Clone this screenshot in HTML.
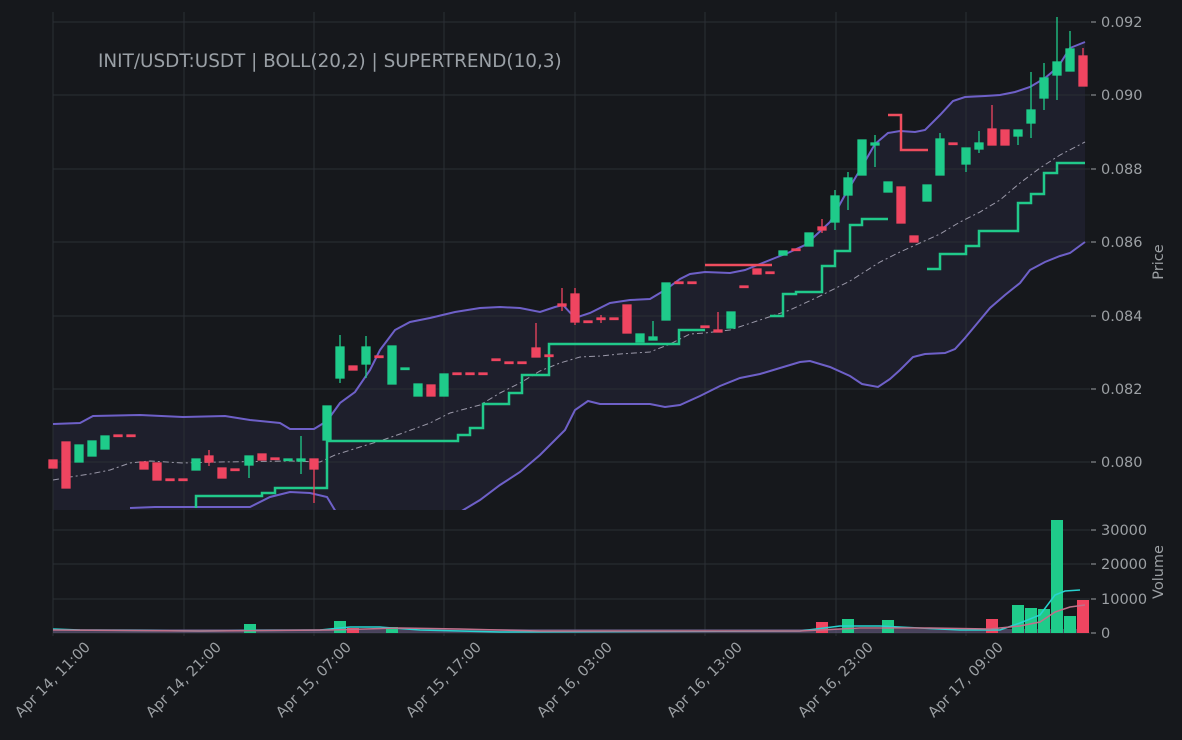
<!DOCTYPE html>
<html><head><meta charset="utf-8"><style>
html,body{margin:0;padding:0;background:#16181c;}
svg{display:block;font-family:"DejaVu Sans","Liberation Sans",sans-serif;}
</style></head><body>
<svg width="1182" height="740" viewBox="0 0 1182 740" xmlns="http://www.w3.org/2000/svg">
<rect width="1182" height="740" fill="#16181c"/>
<clipPath id="pc"><rect x="53" y="10" width="1040" height="500"/></clipPath>
<g clip-path="url(#pc)">
<path fill="#1e1f2c" d="M53,424 L80,423 93,416 140,415 183,417 225,416 250,420 280,423 290,429 314,429 327,421 340,403 355,392 370,370 380,350 395,330 410,322 430,318 455,312 480,308 500,307 520,308 540,312 555,307 563,305 575,318 590,313 610,303 630,300 650,299 665,290 680,279 690,274 705,272 730,273 745,270 760,264 775,258 790,252 805,245 815,236 830,222 845,195 860,170 875,144 888,133 900,131 915,132 925,130 940,115 953,101 965,97 985,96 1000,95 1015,92 1030,87 1045,78 1058,67 1070,48 1085,42 L1085,242 1070,253 1060,256 1045,262 1030,270 1020,283 1005,295 990,308 980,320 965,338 955,349 945,353 925,354 913,357 900,370 890,379 878,387 862,384 850,376 830,367 810,361 800,362 780,368 760,374 740,378 720,386 700,396 680,405 665,407 650,404 600,404 588,401 575,410 565,430 555,440 540,455 520,472 500,485 480,500 462,510 53,510 Z"/>
</g>
<g stroke="#2b2f35" stroke-width="1">
<line x1="53" y1="22" x2="1090" y2="22"/><line x1="53" y1="95" x2="1090" y2="95"/><line x1="53" y1="169" x2="1090" y2="169"/><line x1="53" y1="242" x2="1090" y2="242"/><line x1="53" y1="316" x2="1090" y2="316"/><line x1="53" y1="389" x2="1090" y2="389"/><line x1="53" y1="462" x2="1090" y2="462"/>
<line x1="53" y1="530" x2="1090" y2="530"/><line x1="53" y1="564" x2="1090" y2="564"/><line x1="53" y1="599" x2="1090" y2="599"/><line x1="53" y1="633" x2="1090" y2="633"/>
<line x1="53" y1="12" x2="53" y2="636"/><line x1="184" y1="12" x2="184" y2="636"/><line x1="314" y1="12" x2="314" y2="636"/><line x1="444" y1="12" x2="444" y2="636"/><line x1="575" y1="12" x2="575" y2="636"/><line x1="705" y1="12" x2="705" y2="636"/><line x1="836" y1="12" x2="836" y2="636"/><line x1="966" y1="12" x2="966" y2="636"/>
</g>
<g clip-path="url(#pc)" fill="none">
<polyline stroke="#6e60c8" stroke-width="2" points="53,424 80,423 93,416 140,415 183,417 225,416 250,420 280,423 290,429 314,429 327,421 340,403 355,392 370,370 380,350 395,330 410,322 430,318 455,312 480,308 500,307 520,308 540,312 555,307 563,305 575,318 590,313 610,303 630,300 650,299 665,290 680,279 690,274 705,272 730,273 745,270 760,264 775,258 790,252 805,245 815,236 830,222 845,195 860,170 875,144 888,133 900,131 915,132 925,130 940,115 953,101 965,97 985,96 1000,95 1015,92 1030,87 1045,78 1058,67 1070,48 1085,42"/>
<polyline stroke="#6e60c8" stroke-width="2" points="130,508 155,507 185,507 250,507 270,497 290,492 310,493 327,497 336,512"/>
<polyline stroke="#6e60c8" stroke-width="2" points="460,512 480,500 500,485 520,472 540,455 555,440 565,430 575,410 588,401 600,404 650,404 665,407 680,405 700,396 720,386 740,378 760,374 780,368 800,362 810,361 830,367 850,376 862,384 878,387 890,379 900,370 913,357 925,354 945,353 955,349 965,338 980,320 990,308 1005,295 1020,283 1030,270 1045,262 1060,256 1070,253 1085,242"/>
<polyline stroke="#9a98a8" stroke-width="1" stroke-dasharray="6,3,2,3" points="53,480 70,477 90,474 110,470 130,463 150,461 183,463 220,462 290,461 320,462 335,455 360,447 380,441 400,434 430,423 450,413 480,405 500,393 520,383 540,371 560,363 580,357 600,356 620,354 650,352 670,344 690,334 705,333 730,330 760,320 790,310 820,296 850,281 880,262 900,252 920,243 940,234 960,222 980,212 1000,200 1020,183 1040,168 1060,155 1085,142"/>
<polyline stroke="#21c98a" stroke-width="2.5" points="196,508 196,496 262,496 262,493 275,493 275,488 327,488 327,441 458,441 458,435 470,435 470,428 483,428 483,404 509,404 509,393 522,393 522,375 549,375 549,344 679,344 679,330 705,330"/>
<polyline stroke="#21c98a" stroke-width="2.5" points="770,316 783,316 783,294 796,294 796,292 822,292 822,266 835,266 835,251 850,251 850,225 862,225 862,219 888,219"/>
<polyline stroke="#21c98a" stroke-width="2.5" points="927,269 940,269 940,254 966,254 966,246 979,246 979,231 1018,231 1018,203 1031,203 1031,194 1044,194 1044,173 1057,173 1057,163 1085,163"/>
<polyline stroke="#ef4d5e" stroke-width="2.5" points="705,265 772,265"/>
<polyline stroke="#ef4d5e" stroke-width="2.5" points="888,115 901,115 901,150 928,150"/>
</g>
<g stroke-width="1.3">
<g fill="#ef4560" stroke="#ef4560">
<rect x="49" y="460" width="8" height="8"/>
<line x1="66" y1="442" x2="66" y2="488"/><rect x="62" y="442" width="8" height="46"/>
<rect x="114" y="435" width="8" height="1.5"/><rect x="127" y="435" width="8" height="1.5"/>
<rect x="140" y="462" width="8" height="7"/>
<line x1="157" y1="463" x2="157" y2="480"/><rect x="153" y="463" width="8" height="17"/>
<rect x="166" y="479" width="8" height="1.5"/><rect x="179" y="479" width="8" height="1.5"/>
<line x1="209" y1="450" x2="209" y2="466"/><rect x="205" y="456" width="8" height="6"/>
<rect x="218" y="468" width="8" height="10"/>
<rect x="231" y="469" width="8" height="1.5"/>
<rect x="258" y="454" width="8" height="6"/>
<rect x="271" y="458" width="8" height="1.5"/>
<line x1="314" y1="459" x2="314" y2="503"/><rect x="310" y="459" width="8" height="10"/>
<rect x="349" y="366" width="8" height="4"/>
<rect x="375" y="356" width="8" height="1.5"/>
<rect x="427" y="385" width="8" height="11"/>
<rect x="453" y="373" width="8" height="1.5"/><rect x="466" y="373" width="8" height="1.5"/><rect x="479" y="373" width="8" height="1.5"/>
<rect x="492" y="359" width="8" height="1.5"/><rect x="505" y="362" width="8" height="1.5"/><rect x="518" y="362" width="8" height="1.5"/>
<line x1="536" y1="323" x2="536" y2="357"/><rect x="532" y="348" width="8" height="9"/>
<rect x="545" y="355" width="8" height="1.5"/>
<line x1="562" y1="288" x2="562" y2="311"/><rect x="558" y="304" width="8" height="2"/>
<line x1="575" y1="288" x2="575" y2="325"/><rect x="571" y="294" width="8" height="28"/>
<rect x="584" y="321" width="8" height="1.5"/>
<line x1="601" y1="315" x2="601" y2="323"/><rect x="597" y="318" width="8" height="1.5"/>
<rect x="610" y="318" width="8" height="1.5"/>
<rect x="623" y="305" width="8" height="28"/>
<rect x="675" y="282" width="8" height="1.5"/><rect x="688" y="282" width="8" height="1.5"/>
<rect x="701" y="326" width="8" height="1.5"/>
<line x1="718" y1="312" x2="718" y2="332"/><rect x="714" y="330" width="8" height="2"/>
<rect x="740" y="286" width="8" height="1.5"/>
<rect x="753" y="269" width="8" height="5"/>
<rect x="766" y="272" width="8" height="1.5"/>
<rect x="792" y="249" width="8" height="1.5"/>
<line x1="822" y1="219" x2="822" y2="233"/><rect x="818" y="227" width="8" height="3"/>
<rect x="897" y="187" width="8" height="36"/>
<rect x="910" y="236" width="8" height="6"/>
<rect x="949" y="143" width="8" height="1.5"/>
<line x1="992" y1="105" x2="992" y2="145"/><rect x="988" y="129" width="8" height="16"/>
<rect x="1001" y="130" width="8" height="15"/>
<line x1="1083" y1="48" x2="1083" y2="86"/><rect x="1079" y="56" width="8" height="30"/>
</g>
<g fill="#1fcb8a" stroke="#1fcb8a">
<rect x="75" y="445" width="8" height="17"/>
<rect x="88" y="441" width="8" height="15"/>
<rect x="101" y="436" width="8" height="13"/>
<rect x="192" y="459" width="8" height="11"/>
<line x1="249" y1="456" x2="249" y2="478"/><rect x="245" y="456" width="8" height="9"/>
<rect x="284" y="459" width="8" height="1.5"/>
<line x1="301" y1="436" x2="301" y2="474"/><rect x="297" y="459" width="8" height="2"/>
<rect x="323" y="406" width="8" height="34"/>
<line x1="340" y1="335" x2="340" y2="383"/><rect x="336" y="347" width="8" height="31"/>
<line x1="366" y1="336" x2="366" y2="378"/><rect x="362" y="347" width="8" height="17"/>
<rect x="388" y="346" width="8" height="38"/>
<rect x="401" y="368" width="8" height="1.5"/>
<rect x="414" y="384" width="8" height="12"/>
<rect x="440" y="374" width="8" height="22"/>
<rect x="636" y="334" width="8" height="8"/>
<line x1="653" y1="321" x2="653" y2="340"/><rect x="649" y="337" width="8" height="3"/>
<rect x="662" y="283" width="8" height="37"/>
<rect x="727" y="312" width="8" height="16"/>
<rect x="779" y="251" width="8" height="4"/>
<rect x="805" y="233" width="8" height="13"/>
<line x1="835" y1="190" x2="835" y2="230"/><rect x="831" y="196" width="8" height="26"/>
<line x1="848" y1="172" x2="848" y2="210"/><rect x="844" y="178" width="8" height="17"/>
<rect x="858" y="140" width="8" height="35"/>
<line x1="875" y1="135" x2="875" y2="167"/><rect x="871" y="143" width="8" height="2"/>
<rect x="884" y="182" width="8" height="10"/>
<rect x="923" y="185" width="8" height="16"/>
<line x1="940" y1="133" x2="940" y2="175"/><rect x="936" y="139" width="8" height="36"/>
<line x1="966" y1="148" x2="966" y2="172"/><rect x="962" y="148" width="8" height="16"/>
<line x1="979" y1="131" x2="979" y2="153"/><rect x="975" y="143" width="8" height="6"/>
<line x1="1018" y1="131" x2="1018" y2="145"/><rect x="1014" y="130" width="8" height="6"/>
<line x1="1031" y1="72" x2="1031" y2="138"/><rect x="1027" y="110" width="8" height="13"/>
<line x1="1044" y1="63" x2="1044" y2="110"/><rect x="1040" y="78" width="8" height="20"/>
<line x1="1057" y1="17" x2="1057" y2="100"/><rect x="1053" y="62" width="8" height="13"/>
<line x1="1070" y1="31" x2="1070" y2="71"/><rect x="1066" y="49" width="8" height="22"/>
</g>
</g>
<g>
<rect x="53" y="629" width="1032" height="4" fill="#6b5f86" opacity="0.6"/>
<g fill="#1fcb8a">
<rect x="244" y="624" width="12" height="9"/><rect x="334" y="621" width="12" height="12"/><rect x="386" y="627" width="12" height="6"/>
<rect x="842" y="619" width="12" height="14"/><rect x="882" y="620" width="12" height="13"/>
<rect x="1012" y="605" width="12" height="28"/><rect x="1025" y="608" width="12" height="25"/><rect x="1038" y="609" width="12" height="24"/>
<rect x="1051" y="520" width="12" height="113"/><rect x="1064" y="616" width="12" height="17"/>
</g>
<g fill="#ef4560">
<rect x="816" y="622" width="12" height="11"/><rect x="986" y="619" width="12" height="14"/><rect x="1077" y="600" width="12" height="33"/>
<rect x="347" y="628" width="12" height="5"/>
</g>
<polyline fill="none" stroke="#27d3d0" stroke-width="1.5" points="53,629 80,630 200,631 320,630 350,627 380,627 420,630 500,632 800,631 840,626 880,626 960,630 1000,630 1020,623 1040,615 1055,595 1065,591 1080,590"/>
<polyline fill="none" stroke="#c0708a" stroke-width="1.5" points="53,630 200,631 330,630 400,628 460,629 540,631 800,631 860,628 930,628 990,629 1020,626 1040,622 1055,612 1070,607 1085,605"/>
</g>
<text x="98" y="67" font-size="18.4" fill="#9aa0a6">INIT/USDT:USDT | BOLL(20,2) | SUPERTREND(10,3)</text>
<g stroke="#9ca0a4"><line x1="1091" y1="22" x2="1096" y2="22"/><line x1="1091" y1="95" x2="1096" y2="95"/><line x1="1091" y1="169" x2="1096" y2="169"/><line x1="1091" y1="242" x2="1096" y2="242"/><line x1="1091" y1="316" x2="1096" y2="316"/><line x1="1091" y1="389" x2="1096" y2="389"/><line x1="1091" y1="462" x2="1096" y2="462"/>
<line x1="1091" y1="530" x2="1096" y2="530"/><line x1="1091" y1="564" x2="1096" y2="564"/><line x1="1091" y1="599" x2="1096" y2="599"/><line x1="1091" y1="633" x2="1096" y2="633"/></g>
<g font-size="14.5" fill="#9ca0a4">
<text x="1101" y="27">0.092</text><text x="1101" y="100">0.090</text><text x="1101" y="174">0.088</text><text x="1101" y="247">0.086</text><text x="1101" y="321">0.084</text><text x="1101" y="394">0.082</text><text x="1101" y="467">0.080</text>
<text x="1101" y="535">30000</text><text x="1101" y="569">20000</text><text x="1101" y="604">10000</text><text x="1101" y="638">0</text>
<text transform="translate(1163,262) rotate(-90)" text-anchor="middle">Price</text>
<text transform="translate(1163,572) rotate(-90)" text-anchor="middle">Volume</text>
</g>
<g font-size="14.5" fill="#9ca0a4" text-anchor="end">
<text transform="translate(91,648) rotate(-45)">Apr 14, 11:00</text>
<text transform="translate(222,648) rotate(-45)">Apr 14, 21:00</text>
<text transform="translate(352,648) rotate(-45)">Apr 15, 07:00</text>
<text transform="translate(482,648) rotate(-45)">Apr 15, 17:00</text>
<text transform="translate(613,648) rotate(-45)">Apr 16, 03:00</text>
<text transform="translate(743,648) rotate(-45)">Apr 16, 13:00</text>
<text transform="translate(874,648) rotate(-45)">Apr 16, 23:00</text>
<text transform="translate(1004,648) rotate(-45)">Apr 17, 09:00</text>
</g>
</svg>
</body></html>
